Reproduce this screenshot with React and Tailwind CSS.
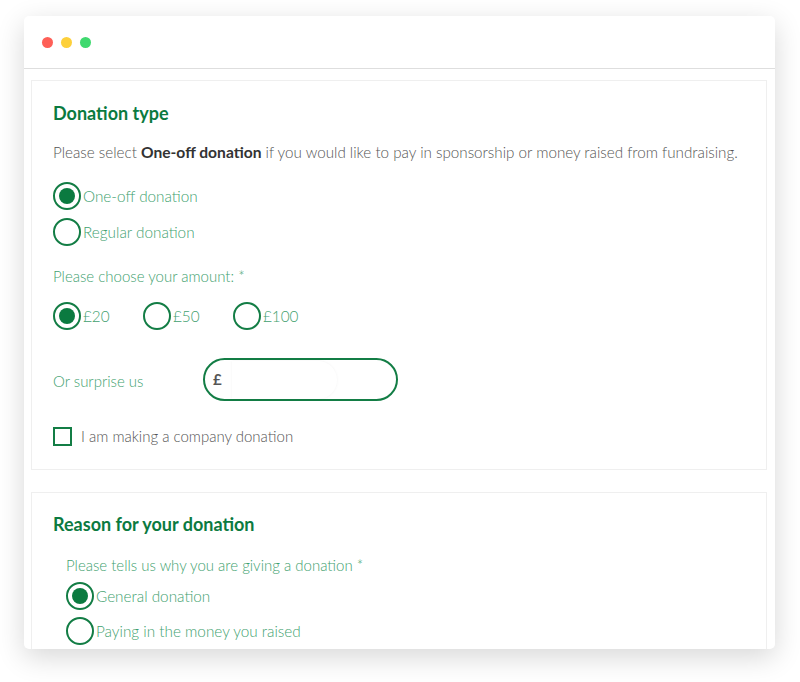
import { useState } from "react";

function Radio({ checked, label, onClick, className = "" }) {
  return (
    <button
      type="button"
      onClick={onClick}
      className={"flex items-center gap-[2px] text-left " + className}
    >
      <span className="flex h-[28px] w-[28px] shrink-0 items-center justify-center rounded-full border-2 border-[#137d45]">
        {checked && <span className="h-[16px] w-[16px] rounded-full bg-[#0b7a40]" />}
      </span>
      <span className="text-[15.3px] font-light leading-[22px] text-[#429f6f]">{label}</span>
    </button>
  );
}

export default function App() {
  const [type, setType] = useState("one-off");
  const [amount, setAmount] = useState("20");
  const [reason, setReason] = useState("general");
  const [company, setCompany] = useState(false);
  const [custom, setCustom] = useState("");

  return (
    <div
      className="h-[682px] w-[800px] overflow-hidden bg-white px-[24px] pt-[16px]"
      style={{ fontFamily: "Lato, 'Open Sans', sans-serif" }}
    >
      <div className="flex h-[633px] w-[751px] flex-col overflow-hidden rounded-[5px] bg-white shadow-[0_8px_28px_rgba(0,0,0,0.16)]">
        {/* window bar */}
        <div className="flex h-[53px] shrink-0 items-center gap-[8px] border-b border-[#dedede] pl-[18px]">
          <span className="h-[11px] w-[11px] rounded-full bg-[#fe5f57]" />
          <span className="h-[11px] w-[11px] rounded-full bg-[#fdd03b]" />
          <span className="h-[11px] w-[11px] rounded-full bg-[#3fd96f]" />
        </div>

        <div className="flex flex-col gap-[22px] pl-[7px] pr-[8px] pt-[11px]">
          {/* donation type */}
          <div className="border border-[#efefef] px-[21px] pb-[22px] pt-[20px]">
            <h2 className="text-[18px] font-bold leading-[24px] text-[#0b7a40]">Donation type</h2>
            <p className="mt-[16px] text-[15.2px] font-light leading-[22px] text-[#555]">
              Please select <b className="text-[15.6px] font-bold text-[#333]">One-off donation</b> if you would like
              to pay in sponsorship or money raised from fundraising.
            </p>
            <div className="mt-[19px] flex flex-col gap-[8px]">
              <Radio checked={type === "one-off"} label="One-off donation" onClick={() => setType("one-off")} />
              <Radio checked={type === "regular"} label="Regular donation" onClick={() => setType("regular")} />
            </div>

            <p className="mt-[19px] text-[15px] font-light leading-[22px] text-[#429f6f]">
              Please choose your amount: *
            </p>
            <div className="mt-[15px] flex">
              {["20", "50", "100"].map((a) => (
                <Radio
                  key={a}
                  className="w-[90px]"
                  checked={amount === a}
                  label={"£" + a}
                  onClick={() => setAmount(a)}
                />
              ))}
            </div>

            <div className="mt-[28px] flex items-center">
              <span className="w-[150px] pt-[3px] text-[15px] font-light leading-[22px] text-[#429f6f]">
                Or surprise us
              </span>
              <div className="flex h-[43px] w-[195px] items-center rounded-full border-2 border-[#137d45] pl-[8px]">
                <span className="w-[19px] text-[15px] font-bold text-[#555]">£</span>
                <input
                  value={custom}
                  onChange={(e) => setCustom(e.target.value)}
                  className="h-[38px] w-[105px] rounded-r-[20px] bg-white px-2 text-[15px] text-[#555] shadow-[0_0_3px_rgba(0,0,0,0.05)] outline-none"
                />
              </div>
            </div>

            <label className="mt-[24px] flex cursor-pointer items-center gap-[9px]">
              <span
                onClick={() => setCompany(!company)}
                className="flex h-[19px] w-[19px] items-center justify-center border-2 border-[#137d45]"
              >
                {company && <span className="h-[9px] w-[9px] bg-[#0b7a40]" />}
              </span>
              <span className="text-[15px] font-light leading-[22px] text-[#555]">I am making a company donation</span>
            </label>
          </div>

          {/* reason */}
          <div className="border border-[#efefef] px-[21px] pb-[22px] pt-[19px]">
            <h2 className="text-[18px] font-bold leading-[24px] text-[#0b7a40]">Reason for your donation</h2>
            <div className="pl-[13px]">
              <p className="mt-[18px] text-[15px] font-light leading-[22px] text-[#429f6f]">
                Please tells us why you are giving a donation *
              </p>
              <div className="mt-[6px] flex flex-col gap-[7px]">
                <Radio checked={reason === "general"} label="General donation" onClick={() => setReason("general")} />
                <Radio
                  checked={reason === "raised"}
                  label="Paying in the money you raised"
                  onClick={() => setReason("raised")}
                />
              </div>
            </div>
          </div>
        </div>
      </div>
    </div>
  );
}
